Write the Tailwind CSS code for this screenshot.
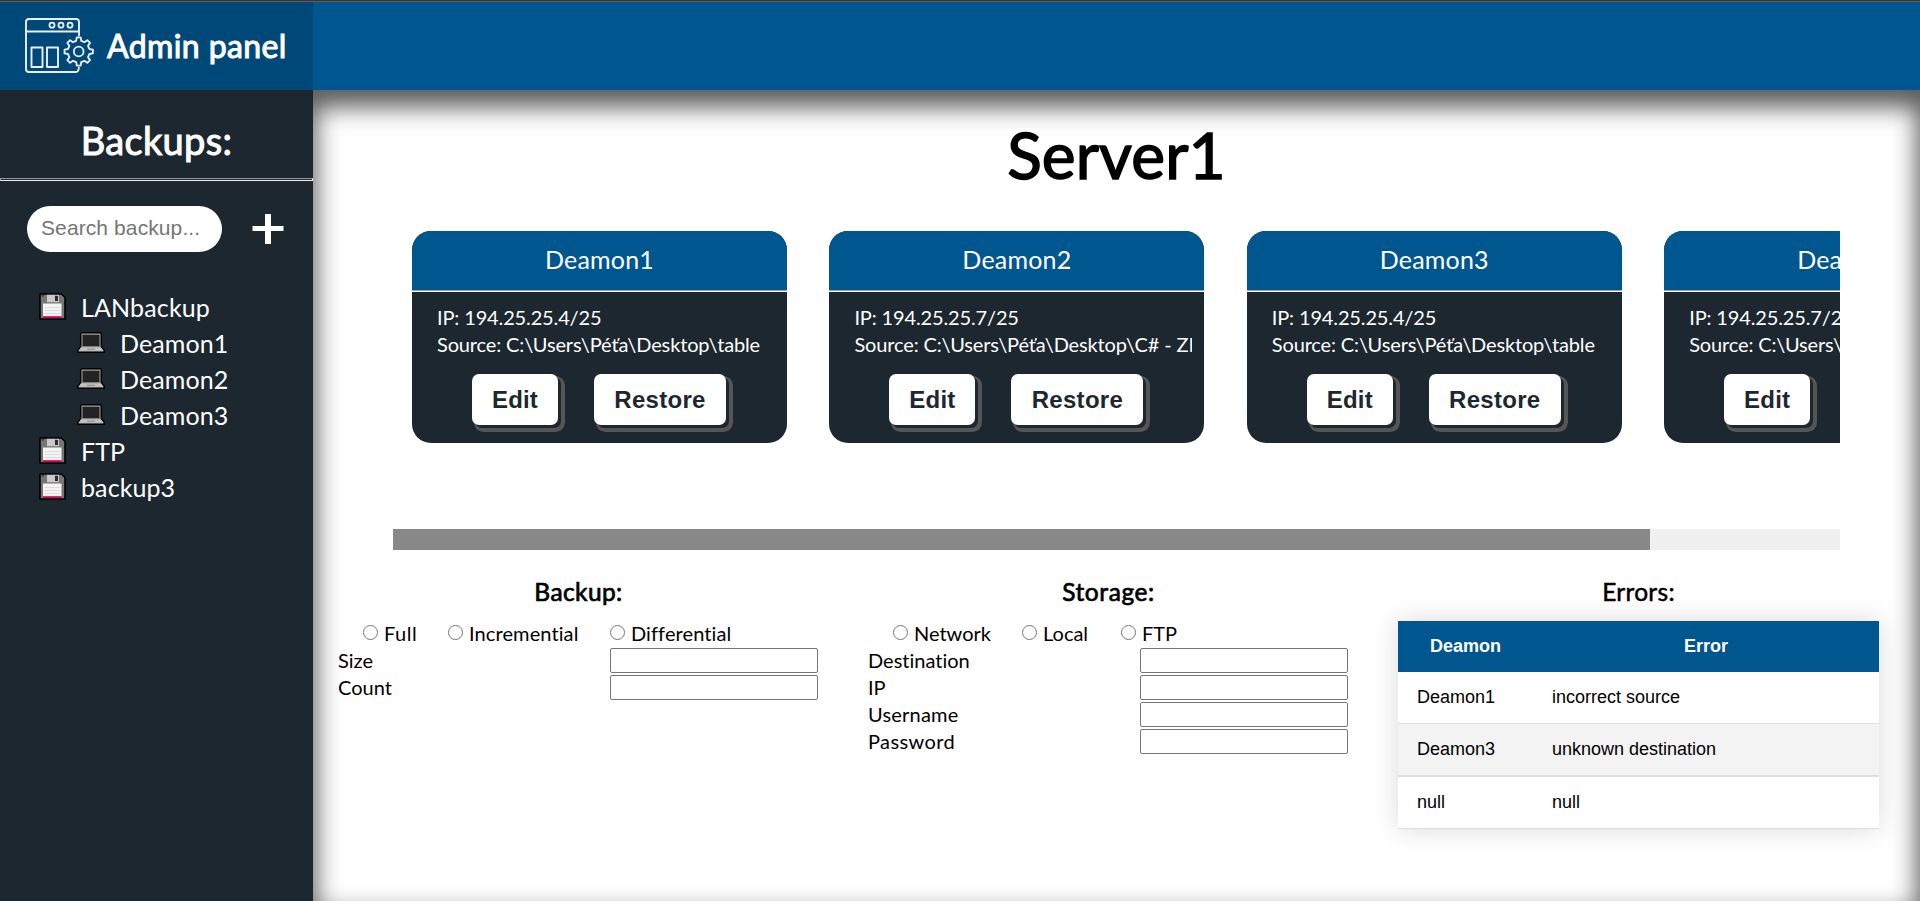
<!DOCTYPE html>
<html lang="en">
<head>
<meta charset="utf-8">
<title>Admin panel</title>
<script src="https://cdn.jsdelivr.net/npm/@tailwindcss/browser@4"></script>
</head>
<body class="w-[1920px] h-[901px] overflow-hidden flex flex-col bg-white font-['Lato','Noto_Sans',sans-serif] text-black [font-variant-ligatures:none]">

<svg class="hidden">
  <symbol id="floppy" viewBox="0 0 27 27">
    <path d="M1 1H22.5L26 4.500V26H1Z" fill="#767676" stroke="#000" stroke-width="1.6" stroke-linejoin="round"/>
    <rect x="8" y="1.800" width="12" height="7.400" fill="#c9c9c9"/>
    <rect x="16" y="2.800" width="3" height="5.200" fill="#2b2b2b"/>
    <rect x="2.800" y="2" width="2" height="1.600" fill="#333"/>
    <rect x="4" y="10.500" width="18.500" height="13" fill="#f4f4f4"/>
    <path d="M6 14.500H21M6 17.500H21M6 20.500H21" stroke="#dcdcdc" stroke-width="1"/>
    <rect x="4" y="23.300" width="18.500" height="1.800" fill="#d5004f"/>
  </symbol>
  <symbol id="laptop" viewBox="0 0 28 21">
    <path d="M5 .8H23Q24.300 .8 24.300 2.200V14.500L27.200 18.200V20.200H.8V18.200L3.700 14.500V2.200Q3.700 .8 5 .8Z" fill="#a6a6a6" stroke="#000" stroke-width="1.500" stroke-linejoin="round"/>
    <rect x="5.500" y="2.700" width="17" height="11.600" fill="#232323"/>
    <path d="M4 15.600H24L26.300 18.800H1.700Z" fill="#c2c2c2"/>
    <path d="M10 17.300H18" stroke="#929292" stroke-width="1.200"/>
  </symbol>
</svg>

<div class="h-px bg-[#343536] shrink-0"></div>
<div class="h-px bg-[#615b59] shrink-0"></div>

<header class="h-[88px] shrink-0 bg-[#00568f] flex">
  <div class="w-[313px] h-full bg-[#004877] flex items-center pl-6 text-white">
    <svg class="w-[72px] h-[58px]" viewBox="24 17 72 58" fill="none" stroke="#e9f0f5" stroke-width="1.900" stroke-linejoin="round">
      <path d="M79 36V22Q79 19 76 19H29Q26 19 26 22V69Q26 72 29 72H76Q78.500 72 79 67M26 31.500H79"/>
      <g stroke-width="1.800"><circle cx="52" cy="25.200" r="2.500"/><circle cx="61" cy="25.200" r="2.500"/><circle cx="70" cy="25.200" r="2.500"/></g>
      <path d="M31.500 47.500H42.500V67H31.500ZM47 47.500H58V67H47Z"/>
      <g transform="translate(78.700 51.500) scale(.97)">
        <path d="M11 -2.600L14.600 -2V2L11 2.600L9.600 5.900L11.700 8.900L8.900 11.700L5.900 9.600L2.600 11L2 14.600H-2L-2.600 11L-5.900 9.600L-8.900 11.700L-11.700 8.900L-9.600 5.900L-11 2.600L-14.600 2V-2L-11 -2.600L-9.600 -5.900L-11.700 -8.900L-8.900 -11.700L-5.900 -9.600L-2.600 -11L-2 -14.600H2L2.600 -11L5.900 -9.600L8.900 -11.700L11.700 -8.900L9.600 -5.900Z"/>
        <circle r="5"/>
      </g>
    </svg>
    <span class="ml-[11px] pb-px text-[32px] leading-[40px] tracking-[0.4px] [-webkit-text-stroke:1px_white]">Admin panel</span>
  </div>
</header>

<div class="flex flex-1 min-h-0">
  <aside class="w-[313px] shrink-0 bg-[#1c272f] text-white">
    <h2 class="h-[88px] pt-[11px] flex items-center justify-center text-[38px] leading-none tracking-[0.3px] [-webkit-text-stroke:1px_white]">Backups:</h2>
    <div class="h-[3px] border border-t-[#9a9a9a] border-l-[#9a9a9a] border-[#eeeeee]"></div>
    <div class="flex items-center mt-[25px] ml-[27px] h-[46px]">
      <input class="w-[195px] h-[46px] rounded-full bg-white pl-[14px] pb-[2px] text-[21px] tracking-[0.1px] text-black placeholder:text-[#757575] font-['Liberation_Sans',Arial,sans-serif]" placeholder="Search backup...">
      <svg class="w-8 h-8 ml-[30px]" viewBox="0 0 32 32" fill="#fff"><path d="M13 1h6v30h-6zM.5 13h31v5h-31z"/></svg>
    </div>
    <ul class="mt-9 text-[25px] leading-9">
      <li class="flex items-center h-9 pl-[39px]"><svg class="w-[27px] h-[27px] mr-[15px]"><use href="#floppy"/></svg><span class="pt-px tracking-[0.15px]">LANbackup</span></li>
      <li class="flex items-center h-9 pl-[77px]"><svg class="w-[28px] h-[21px] mr-[15px]"><use href="#laptop"/></svg><span class="pt-px tracking-[0.1px]">Deamon1</span></li>
      <li class="flex items-center h-9 pl-[77px]"><svg class="w-[28px] h-[21px] mr-[15px]"><use href="#laptop"/></svg><span class="pt-px tracking-[0.1px]">Deamon2</span></li>
      <li class="flex items-center h-9 pl-[77px]"><svg class="w-[28px] h-[21px] mr-[15px]"><use href="#laptop"/></svg><span class="pt-px tracking-[0.1px]">Deamon3</span></li>
      <li class="flex items-center h-9 pl-[39px]"><svg class="w-[27px] h-[27px] mr-[15px]"><use href="#floppy"/></svg><span class="pt-px">FTP</span></li>
      <li class="flex items-center h-9 pl-[39px]"><svg class="w-[27px] h-[27px] mr-[15px]"><use href="#floppy"/></svg><span class="pt-px tracking-[0.1px]">backup3</span></li>
    </ul>
  </aside>

  <main class="flex-1 min-w-0 bg-white shadow-[inset_0_14px_24px_3px_rgba(0,0,0,0.65)]">
    <h1 class="pt-[33px] h-[141px] text-center text-[64px] leading-[64px] tracking-[0.1px] [-webkit-text-stroke:1.5px_black]">Server1</h1>

    <div class="ml-[80px] w-[1447px] h-[319px] flex flex-col overflow-hidden">
      <div id="cards" class="flex-1 flex items-start gap-[42.4px] pl-[19px]"></div>
      <div class="h-[21px] shrink-0 bg-[#f0f0f0]"><div class="h-full w-[1257px] bg-[#888888]"></div></div>
    </div>

    <div class="grid grid-cols-[481px_481px_481px] gap-[49px] pl-[25px] pt-[22px] text-[20px] leading-[27px]">
      <section>
        <h3 class="h-[48px] text-center text-[24.500px] leading-[39px] tracking-[0.4px] [-webkit-text-stroke:0.7px_black]">Backup:</h3>
        <div class="flex h-[27px] pl-[25px] tracking-[0.1px]">
          <label class="flex w-[85px]"><i class="w-[15px] h-[15px] mt-[5px] mr-[6px] rounded-full border border-[#767676]"></i><span class="tracking-[0.5px]">Full</span></label>
          <label class="flex w-[162px]"><i class="w-[15px] h-[15px] mt-[5px] mr-[6px] rounded-full border border-[#767676]"></i>Incremential</label>
          <label class="flex"><i class="w-[15px] h-[15px] mt-[5px] mr-[6px] rounded-full border border-[#767676]"></i>Differential</label>
        </div>
        <div class="flex justify-between h-[27px]">Size<input class="mt-[1px] mr-px w-[208px] h-[25px] bg-white border border-[#767676] rounded-[2px]"></div>
        <div class="flex justify-between h-[27px]">Count<input class="mt-[1px] mr-px w-[208px] h-[25px] bg-white border border-[#767676] rounded-[2px]"></div>
      </section>
      <section>
        <h3 class="h-[48px] text-center text-[24.500px] leading-[39px] tracking-[0.6px] [-webkit-text-stroke:0.7px_black]">Storage:</h3>
        <div class="flex h-[27px] pl-[25px]">
          <label class="flex w-[129px]"><i class="w-[15px] h-[15px] mt-[5px] mr-[6px] rounded-full border border-[#767676]"></i>Network</label>
          <label class="flex w-[99px]"><i class="w-[15px] h-[15px] mt-[5px] mr-[6px] rounded-full border border-[#767676]"></i>Local</label>
          <label class="flex"><i class="w-[15px] h-[15px] mt-[5px] mr-[6px] rounded-full border border-[#767676]"></i>FTP</label>
        </div>
        <div class="flex justify-between h-[27px]">Destination<input class="mt-[1px] mr-px w-[208px] h-[25px] bg-white border border-[#767676] rounded-[2px]"></div>
        <div class="flex justify-between h-[27px]">IP<input class="mt-[1px] mr-px w-[208px] h-[25px] bg-white border border-[#767676] rounded-[2px]"></div>
        <div class="flex justify-between h-[27px]"><span class="tracking-[0.2px]">Username</span><input class="mt-[1px] mr-px w-[208px] h-[25px] bg-white border border-[#767676] rounded-[2px]"></div>
        <div class="flex justify-between h-[27px]"><span class="tracking-[0.4px]">Password</span><input class="mt-[1px] mr-px w-[208px] h-[25px] bg-white border border-[#767676] rounded-[2px]"></div>
      </section>
      <section>
        <h3 class="h-[49px] text-center text-[24.500px] leading-[39px] tracking-[0.3px] [-webkit-text-stroke:0.5px_black]">Errors:</h3>
        <div class="shadow-[0_0_25px_rgba(0,0,0,0.15)] bg-white text-[18px] leading-[51px] font-['Liberation_Sans',Arial,sans-serif]">
          <div class="grid grid-cols-[135px_1fr] h-[51px] bg-[#00568f] text-white font-bold text-center"><span>Deamon</span><span>Error</span></div>
          <div class="grid grid-cols-[135px_1fr] h-[52px] border-b border-[#dddddd]"><span class="pl-[19px]">Deamon1</span><span class="pl-[19px]">incorrect source</span></div>
          <div class="grid grid-cols-[135px_1fr] h-[53px] border-b-2 border-[#dddddd] bg-[#f3f3f3]"><span class="pl-[19px]">Deamon3</span><span class="pl-[19px]">unknown destination</span></div>
          <div class="grid grid-cols-[135px_1fr] h-[52px] border-b border-[#dddddd]"><span class="pl-[19px]">null</span><span class="pl-[19px]">null</span></div>
        </div>
      </section>
    </div>
  </main>
</div>

<template id="card">
  <article class="w-[375px] h-[212px] shrink-0 rounded-[19px] overflow-hidden bg-[#1c272f] text-white">
    <h4 class="h-[61px] pb-[4px] bg-[#00568f] border-b border-white flex items-center justify-center text-[25px] leading-none tracking-[0.2px] shadow-[inset_0_-1px_0_#a3a3a3]"></h4>
    <div class="ml-[25px] w-[338px] pt-[12px] text-[20px] leading-[27px] tracking-[-0.14px] whitespace-nowrap overflow-hidden"><p></p><p></p></div>
    <div class="flex gap-9 pt-4 pl-[60px] text-[24px] leading-[49px] font-bold text-[#1c272f] font-['Liberation_Sans',Arial,sans-serif]">
      <button class="w-[86px] h-[51px] rounded-[7px] bg-white tracking-[0.2px] shadow-[3px_3px_0_#1c272f,4.5px_4.5px_0_2.5px_#555555]">Edit</button>
      <button class="w-[132px] h-[51px] rounded-[7px] bg-white tracking-[0.3px] shadow-[3px_3px_0_#1c272f,4.5px_4.5px_0_2.5px_#555555]">Restore</button>
    </div>
  </article>
</template>
<script>
  const daemons = [
    ['Deamon1', 'IP: 194.25.25.4/25', 'Source: C:\\Users\\Péťa\\Desktop\\table'],
    ['Deamon2', 'IP: 194.25.25.7/25', 'Source: C:\\Users\\Péťa\\Desktop\\C# - ZI'],
    ['Deamon3', 'IP: 194.25.25.4/25', 'Source: C:\\Users\\Péťa\\Desktop\\table'],
    ['Deamon4', 'IP: 194.25.25.7/25', 'Source: C:\\Users\\Péťa\\Desktop\\C# - ZI']
  ];
  for (const [name, ip, source] of daemons) {
    const card = document.getElementById('card').content.cloneNode(true);
    card.querySelector('h4').textContent = name;
    const lines = card.querySelectorAll('p');
    lines[0].textContent = ip;
    lines[1].textContent = source;
    document.getElementById('cards').append(card);
  }
</script>
</body>
</html>
